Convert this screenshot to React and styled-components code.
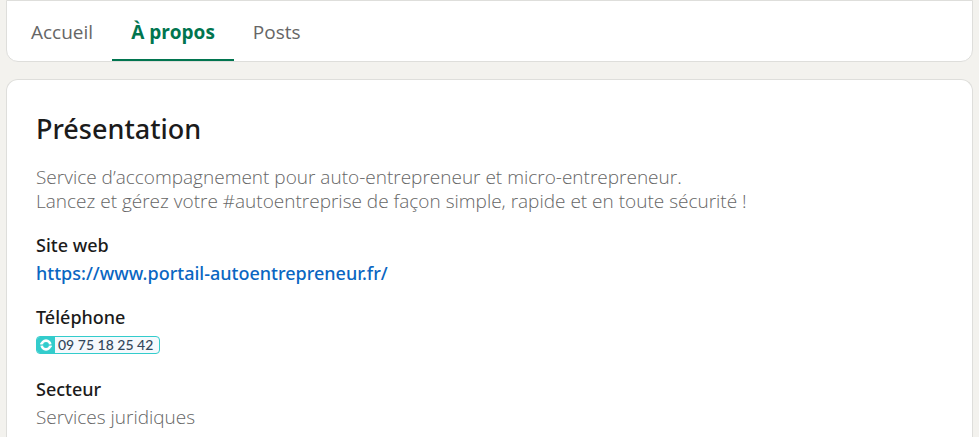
import React from 'react';
import styled, { createGlobalStyle } from 'styled-components';

const GlobalStyle = createGlobalStyle`
  * {
    box-sizing: border-box;
  }
  body {
    margin: 0;
    background: #f3f2ee;
    color: #1b1b1b;
    font-family: 'Noto Sans', 'Open Sans', sans-serif;
    font-size: 18px;
    line-height: 24px;
  }
`;

const Page = styled.main`
  display: flex;
  flex-direction: column;
  gap: 17px;
  min-height: 100vh;
  padding: 0 6px;
`;

const TabBar = styled.nav`
  display: flex;
  padding: 0 5px;
  background: #fff;
  border: 1px solid #dededb;
  border-radius: 0 0 12px 12px;
`;

const Tab = styled.a`
  padding: 19px 19px 15px;
  border-bottom: 2px solid ${props => (props.$active ? '#01754f' : 'transparent')};
  color: ${props => (props.$active ? '#01754f' : '#666')};
  font-family: 'Open Sans', sans-serif;
  font-size: 19px;
  font-weight: ${props => (props.$active ? 700 : 400)};
  text-decoration: none;
`;

const Card = styled.section`
  flex: 1;
  padding: 32px 29px 0;
  background: #fff;
  border: 1px solid #dededb;
  border-bottom: 0;
  border-radius: 12px 12px 0 0;
`;

const Title = styled.h2`
  margin: 0 0 20px;
  font-size: 27px;
  font-weight: 500;
  line-height: 33px;
`;

const Description = styled.p`
  margin: 0 0 20px;
  color: #666;
  font-family: 'Open Sans', sans-serif;
  font-size: 19px;
  font-weight: 300;
  white-space: pre-line;
`;

const Details = styled.dl`
  display: flex;
  flex-direction: column;
  gap: 20px;
  margin: 0;
`;

const Detail = styled.div`
  display: flex;
  flex-direction: column;
  align-items: flex-start;
  gap: 4px;
`;

const Label = styled.dt`
  font-weight: 500;
`;

const Value = styled.dd`
  display: flex;
  align-items: center;
  min-height: 24px;
  margin: 0;
  color: #666;
  font-family: 'Open Sans', sans-serif;
  font-size: 19px;
  font-weight: 300;
`;

const WebLink = styled.a`
  color: #0a66c2;
  font-family: 'Noto Sans', sans-serif;
  font-size: 18px;
  font-weight: 500;
  text-decoration: none;
`;

const PhoneLink = styled.a`
  display: flex;
  align-items: center;
  height: 18px;
  padding-right: 6px;
  overflow: hidden;
  background: #f5f9fd;
  border: 1px solid #33cccc;
  border-radius: 4px;
  color: #33475b;
  font-family: Lato, sans-serif;
  font-size: 14px;
  font-weight: 500;
  line-height: 16px;
  text-decoration: none;
`;

const PhoneBadge = styled.span`
  display: flex;
  align-items: center;
  justify-content: center;
  width: 18px;
  height: 16px;
  margin-right: 3px;
  background: #33cccc;
`;

const tabs = [
  { name: 'Accueil' },
  { name: 'À propos', active: true },
  { name: 'Posts' },
];

const CallIcon = () => (
  <svg width="14" height="14" viewBox="0 0 14 14" aria-hidden="true">
    <circle cx="7" cy="7" r="4.3" fill="none" stroke="#fff" strokeWidth="2.7" />
    <path d="M.8 6.3 2 4.5 3.6 6.3ZM13.2 7.7 12 9.5 10.4 7.7Z" fill="#fff" />
    <path d="M.6 7.3 4.4 6.9M9.6 7.1 13.4 6.7" stroke="#33cccc" strokeWidth="1.1" />
  </svg>
);

const App = () => {
  return (
    <>
      <GlobalStyle />
      <Page>
        <TabBar>
          {tabs.map(tab => (
            <Tab key={tab.name} href="#" $active={tab.active} aria-current={tab.active ? 'page' : undefined}>
              {tab.name}
            </Tab>
          ))}
        </TabBar>
        <Card>
          <Title>Présentation</Title>
          <Description>
            {'Service d’accompagnement pour auto-entrepreneur et micro-entrepreneur.\nLancez et gérez votre #autoentreprise de façon simple, rapide et en toute sécurité !'}
          </Description>
          <Details>
            <Detail>
              <Label>Site web</Label>
              <Value>
                <WebLink href="https://www.portail-autoentrepreneur.fr/">
                  https://www.portail-autoentrepreneur.fr/
                </WebLink>
              </Value>
            </Detail>
            <Detail>
              <Label>Téléphone</Label>
              <Value>
                <PhoneLink href="tel:0975182542">
                  <PhoneBadge>
                    <CallIcon />
                  </PhoneBadge>
                  09 75 18 25 42
                </PhoneLink>
              </Value>
            </Detail>
            <Detail>
              <Label>Secteur</Label>
              <Value>Services juridiques</Value>
            </Detail>
          </Details>
        </Card>
      </Page>
    </>
  );
};

export default App;
